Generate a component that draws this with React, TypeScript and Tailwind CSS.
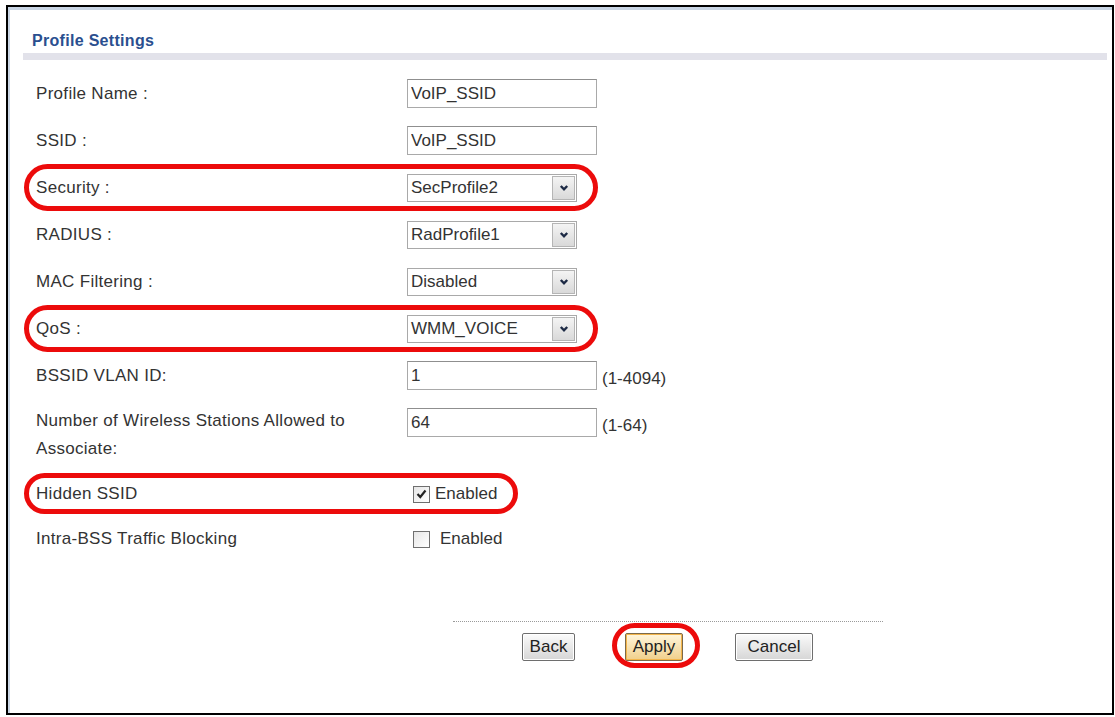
import { ReactNode } from "react";

const FONT = { fontFamily: '"Liberation Sans", Arial, sans-serif' };

function Ring({ className }: { className: string }) {
  return <span className={`pointer-events-none absolute rounded-full border-[5px] border-[#ec0b0b] ${className}`} />;
}

function TextBox({ value }: { value: string }) {
  return (
    <input
      readOnly
      value={value}
      className="h-[29px] w-[190px] border border-[#a9a9a9] border-t-[#8f8f8f] bg-white px-[3px] text-[17px] text-[#333] outline-none"
    />
  );
}

function Select({ value }: { value: string }) {
  return (
    <div className="flex h-[28px] w-[170px] items-center justify-between border border-[#a9a9a9] bg-white pl-[3px] pr-[1px] text-[17px] text-[#333]">
      <span>{value}</span>
      <span className="flex h-[24px] w-[23px] items-center justify-center border border-[#b5b5b5] bg-gradient-to-b from-[#f4f4f4] to-[#d9d9d9]">
        <svg width="10" height="8" viewBox="0 0 10 8">
          <path d="M1.8 2 L5 5.3 L8.2 2" fill="none" stroke="#1d2a45" strokeWidth="2.4" />
        </svg>
      </span>
    </div>
  );
}

function Check({ checked }: { checked?: boolean }) {
  return (
    <span className="flex h-[17px] w-[17px] items-center justify-center border border-[#6f6f6f] bg-gradient-to-br from-[#e6e6e6] to-white">
      {checked && (
        <svg width="11" height="10" viewBox="0 0 11 10">
          <path d="M1.5 5 L4.3 8 L9.5 1.5" fill="none" stroke="#222" strokeWidth="2.2" />
        </svg>
      )}
    </span>
  );
}

function Row({ label, children, ring, className = "h-[47px] items-center" }: { label: ReactNode; children: ReactNode; ring?: string; className?: string }) {
  return (
    <div className={`relative flex ${className}`}>
      {ring && <Ring className={ring} />}
      <div className="w-[371px] shrink-0 text-[17px] leading-[28px] tracking-[0.3px] text-[#333]">{label}</div>
      <div className="flex items-center">{children}</div>
    </div>
  );
}

function Button({ children, primary, className }: { children: ReactNode; primary?: boolean; className: string }) {
  return (
    <button
      className={`h-[28px] rounded-[2px] border text-[17px] text-[#222] ${
        primary
          ? "border-[#7b6a4a] bg-gradient-to-b from-[#fff6dc] to-[#f0cf8a] shadow-[inset_0_0_0_1px_#f3b54b]"
          : "border-[#6e6e6e] bg-gradient-to-b from-[#fbfbfb] to-[#d6d6d6] shadow-[inset_0_0_0_1px_#fff]"
      } ${className}`}
    >
      {children}
    </button>
  );
}

export default function App() {
  return (
    <div className="h-[717px] w-[1115px] overflow-hidden bg-white pl-[6px] pt-[5px]" style={FONT}>
      <div className="h-[710px] w-[1108px] border-2 border-black">
        <div className="flex h-full flex-col border-l-[2px] border-t-[3px] border-[#c9d5e4]">
          {/* Header */}
          <div className="pl-[22px] pt-[21px] text-[16px] font-bold leading-[20px] tracking-[0.3px] text-[#2a4f8f]">Profile Settings</div>
          <div className="ml-[13px] mr-[5px] mt-[2px] h-[7px] bg-[#e2e2ea]" />

          {/* Form rows */}
          <div className="mt-[10px] pl-[26px]">
            <Row label="Profile Name :">
              <TextBox value="VoIP_SSID" />
            </Row>
            <Row label="SSID :">
              <TextBox value="VoIP_SSID" />
            </Row>
            <Row label="Security :" ring="-left-[12px] top-0 h-[47px] w-[574px]">
              <Select value="SecProfile2" />
            </Row>
            <Row label="RADIUS :">
              <Select value="RadProfile1" />
            </Row>
            <Row label="MAC Filtering :">
              <Select value="Disabled" />
            </Row>
            <Row label="QoS :" ring="-left-[12px] top-0 h-[47px] w-[574px]">
              <Select value="WMM_VOICE" />
            </Row>
            <Row label="BSSID VLAN ID:">
              <TextBox value="1" />
              <span className="ml-[5px] mt-[6px] text-[17px] text-[#333]">(1-4094)</span>
            </Row>
            <Row
              label={
                <>
                  Number of Wireless Stations Allowed to
                  <br />
                  Associate:
                </>
              }
              className="h-[72px] items-start pt-[8px]"
            >
              <TextBox value="64" />
              <span className="ml-[5px] mt-[6px] text-[17px] text-[#333]">(1-64)</span>
            </Row>
            <Row label="Hidden SSID" ring="-left-[12px] top-[2px] h-[41px] w-[494px]" className="h-[46px] items-center">
              <div className="ml-[6px] flex items-center gap-[5px] text-[17px] text-[#333]">
                <Check checked />
                <span>Enabled</span>
              </div>
            </Row>
            <Row label="Intra-BSS Traffic Blocking" className="h-[44px] items-center">
              <div className="ml-[6px] flex items-center gap-[10px] text-[17px] text-[#333]">
                <Check />
                <span>Enabled</span>
              </div>
            </Row>
          </div>

          {/* Footer */}
          <div className="ml-[443px] mt-[60px] w-[430px] border-t border-dotted border-[#9a9a9a]" />
          <div className="mt-[11px] flex items-center pl-[512px]">
            <Button className="w-[53px]">Back</Button>
            <div className="relative ml-[50px]">
              <Ring className="-bottom-[7px] -left-[13px] -right-[17px] -top-[10px]" />
              <Button primary className="w-[58px]">
                Apply
              </Button>
            </div>
            <Button className="ml-[52px] w-[78px]">Cancel</Button>
          </div>
        </div>
      </div>
    </div>
  );
}
